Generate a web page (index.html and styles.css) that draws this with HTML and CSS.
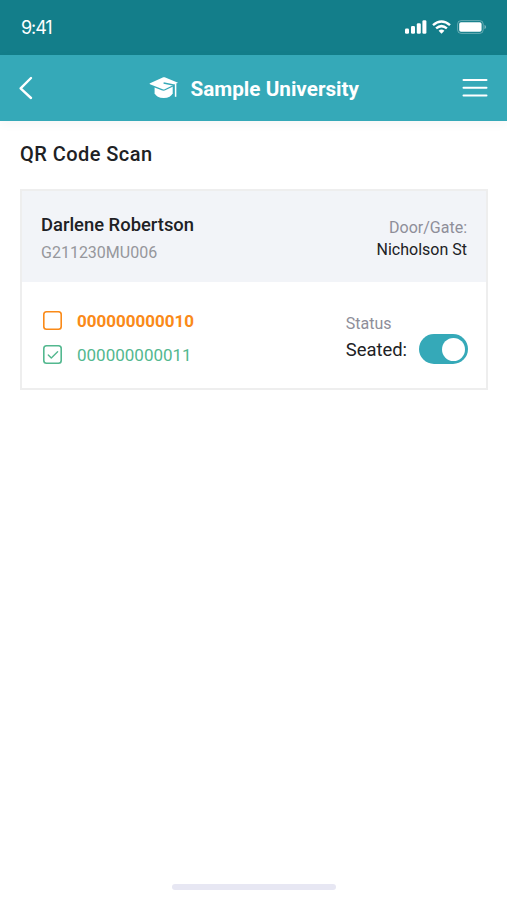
FILE: index.html
```html
<!DOCTYPE html>
<html lang="en">
<head>
<meta charset="utf-8">
<meta name="viewport" content="width=device-width, initial-scale=1">
<title>QR Code Scan</title>
<link rel="stylesheet" href="styles.css">
</head>
<body>
<div class="screen">
  <div class="status-bar">
    <span class="time">9:41</span>
    <div class="indicators">
      <svg width="22" height="14" viewBox="0 0 22 14" fill="#fff"><rect x="0" y="8.5" width="4" height="5.2" rx="1.3"/><rect x="6" y="6" width="4" height="7.7" rx="1.3"/><rect x="11.8" y="3.2" width="4" height="10.5" rx="1.3"/><rect x="17.4" y="0.3" width="4" height="13.4" rx="1.3"/></svg>
      <svg class="wifi" width="19" height="14" viewBox="0 0 19 14" fill="none" stroke="#fff" stroke-width="2.5"><path d="M1 5.1Q9.500-2.100 18 5.100"/><path d="M4.100 8.400Q9.500 3.800 14.900 8.400"/><path d="M6.600 10.700Q9.500 8.200 12.400 10.700L9.500 13.700Z" fill="#fff" stroke="none"/></svg>
      <svg class="battery" width="30" height="14" viewBox="0 0 30 14"><rect x=".6" y=".6" width="25.600" height="12.800" rx="3.500" fill="none" stroke="#fff" stroke-opacity=".35"/><rect x="2.200" y="2.200" width="22.400" height="9.600" rx="1.800" fill="#fff"/><path d="M27.500 4.700q1.600.7 1.600 2.300t-1.600 2.300z" fill="#fff" fill-opacity=".45"/></svg>
    </div>
  </div>
  <header class="nav">
    <svg width="15" height="24" viewBox="0 0 15 24" fill="none" stroke="#fff" stroke-width="2.400" stroke-linecap="round" stroke-linejoin="round"><path d="M13 2L2.600 12.300L13 22"/></svg>
    <div class="brand">
      <svg width="31" height="23" viewBox="0 0 31 23"><path d="M5.600 10V17.300Q7.500 22 14.700 22T23.700 17.300V9Z" fill="#fff"/><path d="M1 7.300L14.300 1.300Q15 1 15.700 1.300L29 6.800L15.700 13.200Q14.700 13.700 13.700 13.200L1 8.300Q0 7.800 1 7.300Z" fill="#fff" stroke="#35a9b8" stroke-width="2.600" paint-order="stroke"/><path d="M14.600 6.900L24.900 9.100V20.700" fill="none" stroke="#35a9b8" stroke-width="1.500"/><path d="M26.600 7.700V20.800" fill="none" stroke="#fff" stroke-width="1.500"/></svg>
      <h1>Sample University</h1>
    </div>
    <svg width="26" height="22" viewBox="0 0 26 22" stroke="#fff" stroke-width="2" stroke-linecap="round"><path d="M1.500 3H24.500M1.500 10.700H24.500M1.500 18.400H24.500"/></svg>
  </header>
  <main>
    <h2>QR Code Scan</h2>
    <section class="card">
      <div class="card-head">
        <div>
          <div class="name">Darlene Robertson</div>
          <div class="code">G211230MU006</div>
        </div>
        <div class="gate">
          <div class="label">Door/Gate:</div>
          <div class="place">Nicholson St</div>
        </div>
      </div>
      <div class="card-body">
        <div class="tickets">
          <div class="ticket open"><i class="box"></i><span>000000000010</span></div>
          <div class="ticket done"><i class="box"><svg width="12" height="10" viewBox="0 0 12 10" fill="none" stroke="currentColor" stroke-width="1.400" stroke-linecap="round" stroke-linejoin="round"><path d="M1.300 5L4.300 8L10.600 1.800"/></svg></i><span>000000000011</span></div>
        </div>
        <div class="status">
          <div class="label">Status</div>
          <div class="seated"><span>Seated:</span><div class="toggle"><i></i></div></div>
        </div>
      </div>
    </section>
  </main>
  <div class="home-bar"></div>
</div>
</body>
</html>
```

FILE: styles.css
```css
* { box-sizing: border-box; }
body { margin: 0; background: #fff; color: #202124; font-family: Roboto, "Liberation Sans", sans-serif; }
h1, h2 { margin: 0; }
svg { display: block; flex: none; }
.screen { display: flex; flex-direction: column; height: 900px; }
.status-bar { height: 54.500px; display: flex; justify-content: space-between; align-items: center; padding: 0 20px 0 21px; background: #137e8a; color: #fff; }
.time { font-family: Inter, sans-serif; font-size: 18px; letter-spacing: -1.100px; }
.indicators { display: flex; align-items: center; }
.wifi { margin-left: 5px; }
.battery { margin-left: 6px; }
.nav { height: 66px; display: flex; align-items: center; padding: 0 19px 0 17.500px; background: #35a9b8; color: #fff; box-shadow: 0 3px 10px rgba(0, 0, 0, .04); }
.brand { display: flex; align-items: center; gap: 11px; margin: 0 auto 0 116px; }
h1 { padding-top: 2px; font-size: 20.700px; line-height: 24px; font-weight: 700; }
main { flex: 1; padding: 21px 19px 0 20px; }
h2 { font-size: 20px; line-height: 24px; font-weight: 500; letter-spacing: .45px; }
.card { margin-top: 23px; height: 201px; border: 2px solid #eee; }
.card-head { height: 91px; display: flex; justify-content: space-between; padding: 20px 19px 0; background: #f2f4f8; }
.name { font-size: 18.400px; line-height: 27px; font-weight: 500; }
.code { margin-top: 3px; font-size: 16px; line-height: 24px; color: #96979c; }
.label { font-size: 16px; line-height: 22px; color: #8e8e99; }
.gate { padding-top: 6px; text-align: right; }
.place { font-size: 16px; line-height: 22px; }
.card-body { display: flex; justify-content: space-between; padding: 27px 18px 0 21px; }
.ticket { display: flex; align-items: center; gap: 15px; height: 24px; font-size: 17px; }
.ticket + .ticket { margin-top: 10px; }
.box { display: flex; align-items: center; justify-content: center; width: 19px; height: 19px; border-radius: 3.500px; box-shadow: inset 0 0 0 1.600px currentColor; }
.open { color: #fa8a18; }
.open span { font-weight: 700; }
.done { color: #53b88f; }
.status { padding-top: 4px; }
.seated { display: flex; align-items: center; gap: 12px; font-size: 18.400px; height: 30px; }
.toggle { display: flex; align-items: center; justify-content: flex-end; width: 49px; height: 30px; margin-top: -1px; padding-right: 3px; border-radius: 15px; background: #35a9b8; }
.toggle i { width: 23px; height: 23px; border-radius: 50%; background: #fff; }
.home-bar { width: 164px; height: 6px; margin: 0 auto 10px 172px; border-radius: 3px; background: #e7e7f3; }
```
